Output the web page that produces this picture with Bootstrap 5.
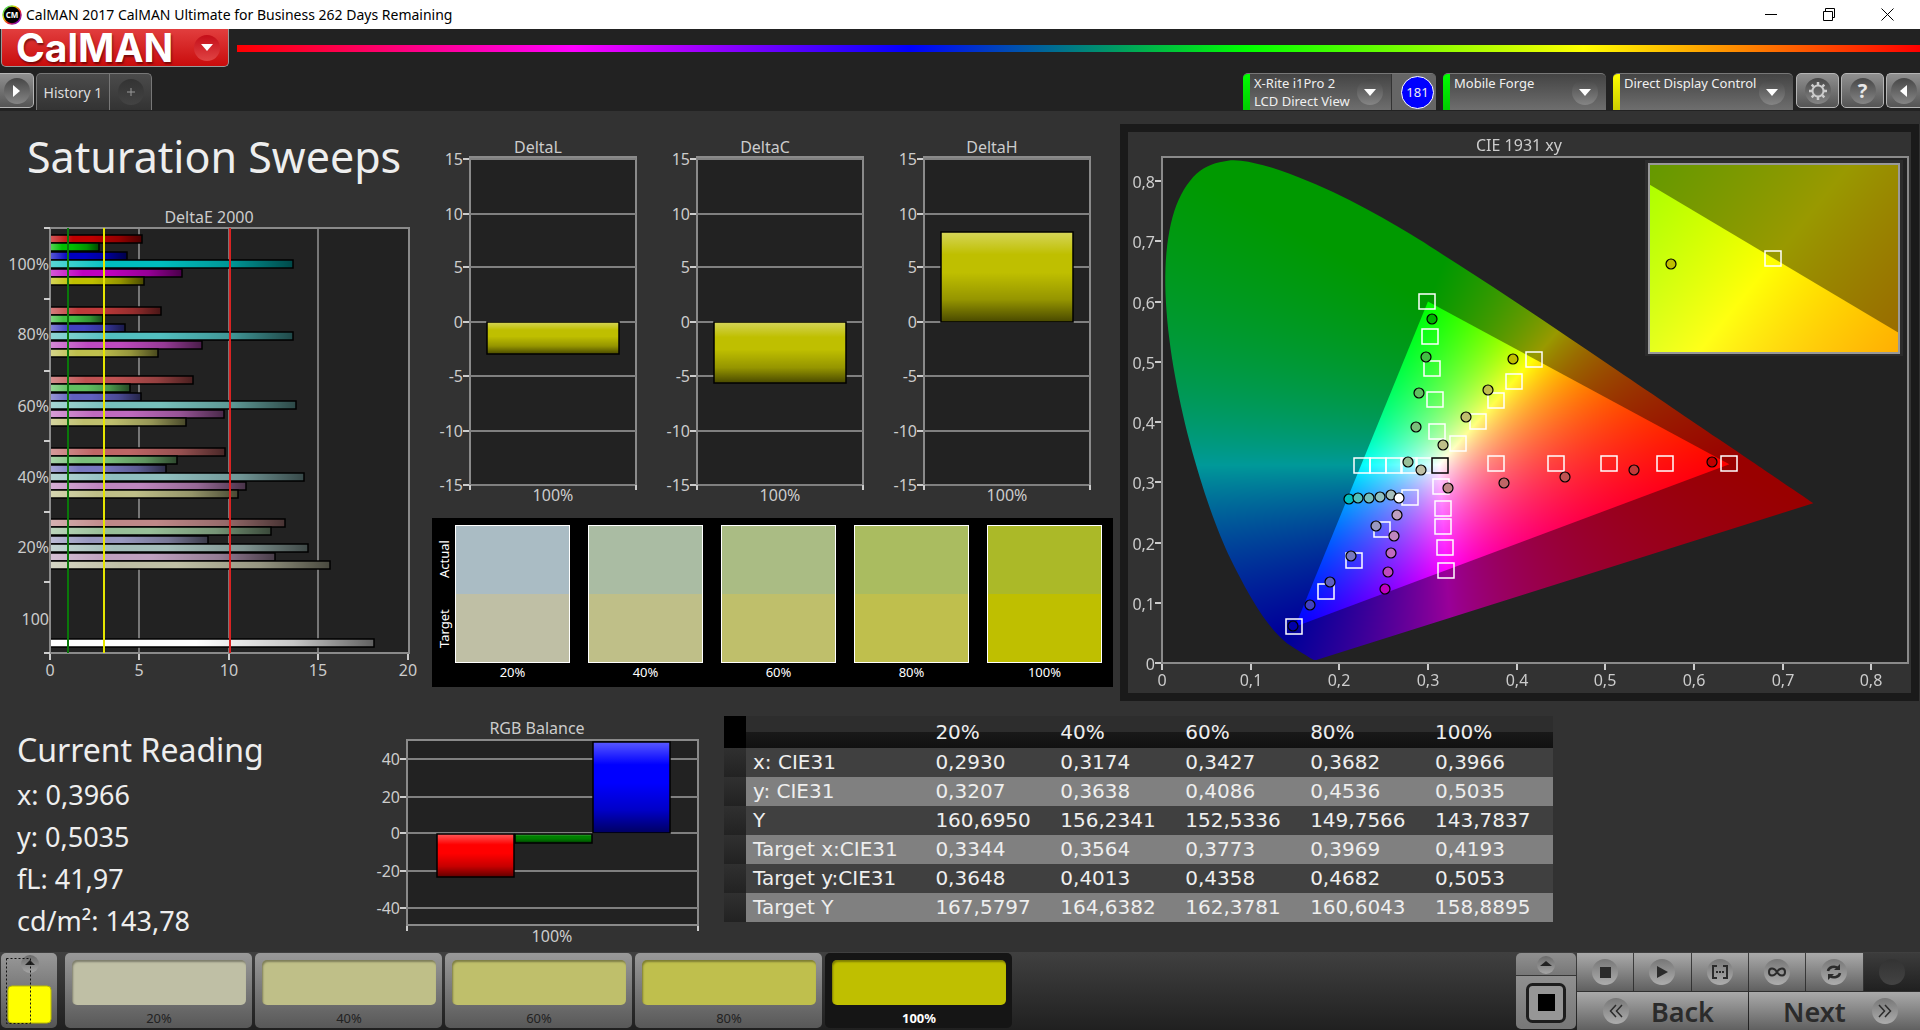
<!DOCTYPE html>
<html lang="en">
<head>
<meta charset="utf-8">
<meta name="viewport" content="width=device-width, initial-scale=1">
<title>CalMAN 2017 CalMAN Ultimate for Business</title>
<link href="https://cdn.jsdelivr.net/npm/bootstrap@5.3.0/dist/css/bootstrap.min.css" rel="stylesheet">
<style>
body{background:#323232;color:#e8e8e8;font-family:"Noto Sans","Open Sans",sans-serif;font-size:13px;line-height:19px}
button{font:inherit;color:inherit;border:0;padding:0}
svg{display:block}
.titlebar{height:29px;background:#fff;color:#000;font-size:14px;padding:0 4px 0 2px}
.titlebar button{width:58px;height:29px;background:none;display:grid;place-items:center}
.apphead{background:#222;padding-bottom:1px}
.brand{margin-left:1px;width:228px;height:38px;padding:0 8px 0 14px;background:linear-gradient(#e23e3e,#c90c0c);border:1px solid #999;border-top:0;border-radius:0 0 5px 5px;color:#fff;font-family:Inter,Lato,sans-serif;font-weight:700;font-size:39px;line-height:36px;text-shadow:1px 2px 2px rgba(60,0,0,.6)}
.rainbow{height:7px;background:linear-gradient(90deg,#f00,#f0f,#00f,#0f0,#ff0,#f00);margin-left:8px}
.tabsrow{padding-top:6px}
.orb{width:26px;height:26px;border-radius:50%;background:linear-gradient(#474747,#858585);display:grid;place-items:center;flex:none}
.orb-red{background:linear-gradient(#c40d18,#e04444)}
.orb-dim{background:linear-gradient(#333,#434343);color:#888}
.orb-light{background:linear-gradient(#777,#adadad);color:#2b2b2b}
.keybtn{width:43px;height:35px;margin-right:2px;border:1px solid #b5b5b5;border-radius:5px;background:linear-gradient(#909090,#555);display:grid;place-items:center}
.key-left{width:34px;border-left:0;border-radius:0 5px 5px 0}
.key-right{width:34px;margin-right:0;border-right:0;border-radius:5px 0 0 5px}
.help{font-size:20px}
.histtab{width:74px;height:37px;border:1px solid #777;border-bottom:0;border-radius:5px 0 0 0;background:linear-gradient(#4b4b4b,#333);font-size:14px;color:#ddd}
.histadd{width:42px;border-left:0;border-radius:0 5px 0 0;display:grid;place-items:center}
.device{height:37px;border-radius:5px 5px 0 0;border-top:1px solid #777;background:linear-gradient(#444,#6e6e6e);display:flex;overflow:hidden;color:#f0f0f0;margin-right:7px}
.device .pick{background:none;display:flex;flex:1;text-align:left;align-items:center;padding-right:8px;line-height:18px}
.device .pick span:first-child{flex:1;align-self:flex-start;padding-left:4px;white-space:nowrap;width:0}
.dev-meter{width:193px}
.dev-source{width:163px}
.dev-display{width:180px;margin-right:3px}
.led{width:7px;background:linear-gradient(#0f0,#0c0);flex:none}
.led-y{background:linear-gradient(#ff0,#cc0)}
.meter{width:45px;padding-right:2px;border-left:1px solid #333;background:#666;display:flex;align-items:center;justify-content:flex-end}
.meter b{width:33px;height:33px;border-radius:50%;border:1px solid #fff;background:#00f;font-weight:400;line-height:31px;text-align:center}
.toprow{display:grid;grid-template-columns:432fr 688fr 800fr}
.lowrow{display:grid;grid-template-columns:360fr 364fr 829fr 367fr;padding-top:15px}
h1{font-size:43px;line-height:48px;font-weight:400;padding:22px 0 24px 27px;margin:0;color:#eee;white-space:nowrap}
.chart{width:100%;height:auto;font-size:16px;fill:#ccc}
.midcol{padding-top:13px}
.swatches{background:#000;margin:8px 7px 0 0;padding:7px 11px 5px 3px;color:#fff;gap:18px}
.sidecap{writing-mode:vertical-rl;transform:rotate(180deg);width:18px;display:flex;margin:0 -16px 19px 0}
.sidecap span{flex:1;text-align:center}
.swatch{flex:1 1 0}
.swatch:nth-child(2){margin-left:0}
.swatch i{display:block;height:68px}
.swatch div{border:1px solid #fff}
.swatch p{margin:0;text-align:center;line-height:19px}
.ciepanel{margin:13px 1px 0 0;border:8px solid #1a1a1a}
.reading{padding:12px 0 0 17px;color:#eee}
.reading h2{font-size:32px;line-height:44px;margin:0 0 2px;font-weight:400}
.reading p{font-size:27px;line-height:42px;margin:0}
.grid-data{width:100%;table-layout:fixed;font-family:"DejaVu Sans",sans-serif;font-size:20px;color:#eee}
.grid-data th,.grid-data td{padding:0 0 0 7px;font-weight:400;height:29px;line-height:29px;white-space:nowrap}
.grid-data thead th{height:32px;line-height:32px;background:linear-gradient(#2d2d2d 50%,#191919 50%,#111)}
.grid-data tbody tr{background:#404040}
.grid-data tbody tr:nth-child(even){background:#808080}
.grid-data tbody td:first-child{background:linear-gradient(#303030,#222)}
.grid-data thead th:first-child{background:#000}
.col-grip{width:22px}
.col-name{width:22%}
.bottombar{height:78px;background:linear-gradient(#404040,#202020);padding:1px 0 2px 1px}
.step{width:187px;height:75px;margin-right:3px;border-radius:5px;background:linear-gradient(#999,#585858);padding:6px 6px 0 7px;color:#222}
.step i{display:block;height:45px;border-radius:5px;box-shadow:inset 1px 2px 2px rgba(0,0,0,.35)}
.step span{display:block;padding-top:4px}
.step.active{background:#151515;color:#fff;font-weight:700}
.levelbtn{width:56px;height:75px;border-radius:5px;background:linear-gradient(#999,#555);margin-right:8px}
.stopcol{width:60px;margin-right:1px}
.stopcol button{width:100%;height:53px;border-radius:0 0 5px 5px;background:linear-gradient(#909090,#777);display:grid;place-items:center}
.stopcol button:first-child{height:22px;border-radius:5px 5px 0 0;margin-bottom:1px}
.mediagrid{display:grid;grid-template-columns:repeat(6,1fr);gap:1px;width:343px}
.mediagrid button{height:38px;background:linear-gradient(#aaa,#606060);display:grid;place-items:center}
.mediagrid .nav-wide{grid-column:span 3;display:flex;align-items:center;justify-content:space-between;font-size:27px;font-weight:600;color:#2b2b2b;padding:0 34px 0 26px}
.mediagrid .nav-next{padding:0 22px 0 34px}
.mediagrid .idle{background:linear-gradient(#3c3c3c,#202020)}
</style>
<script src="https://cdn.jsdelivr.net/npm/bootstrap@5.3.0/dist/js/bootstrap.bundle.min.js"></script>
</head>
<body class="d-flex flex-column min-vh-100">
<div class="titlebar d-flex align-items-center">
  <svg width="20" height="20" viewBox="0 0 20 20" class="me-1"><defs><linearGradient id="ring" x2="1" y2="1"><stop stop-color="#0c8"/><stop offset=".35" stop-color="#dd0"/><stop offset=".6" stop-color="#e22"/><stop offset="1" stop-color="#40f"/></linearGradient></defs><circle cx="10" cy="10" r="9" fill="#000" stroke="url(#ring)" stroke-width="1.5"/><text x="10" y="13" font-size="8" font-weight="700" text-anchor="middle" fill="#fff">CM</text></svg>
  <span class="me-auto">CalMAN 2017 CalMAN Ultimate for Business 262 Days Remaining</span>
  <button aria-label="Minimize"><svg width="12" height="12"><path d="M0 5.500h12" stroke="#000"/></svg></button>
  <button aria-label="Restore"><svg width="13" height="13" fill="none" stroke="#000"><path d="M.5 3.500h9v9h-9zM2.500 3.500v-3h9v9h-2"/></svg></button>
  <button aria-label="Close"><svg width="13" height="13" stroke="#000"><path d="M.5.5l12 12M12.500.5l-12 12"/></svg></button>
</div>
<header class="apphead">
  <div class="d-flex align-items-center">
    <button class="brand d-flex align-items-center justify-content-between">CalMAN <span class="orb orb-red"><svg width="12" height="7"><path d="M0 0h12l-6 7z" fill="#fff"/></svg></span></button>
    <div class="rainbow flex-grow-1"></div>
  </div>
  <div class="tabsrow d-flex align-items-start">
    <button class="keybtn key-left" aria-label="Expand"><span class="orb"><svg width="7" height="12"><path d="M0 0l7 6-7 6z" fill="#fff"/></svg></span></button>
    <button class="histtab">History 1</button>
    <button class="histtab histadd me-auto" aria-label="Add history"><span class="orb orb-dim"><svg width="10" height="10"><path d="M5 1v8M1 5h8" stroke="#999"/></svg></span></button>
    <div class="device dev-meter"><span class="led"></span><button class="pick"><span>X-Rite i1Pro 2<br>LCD Direct View</span><span class="orb"><svg width="12" height="7"><path d="M0 0h12l-6 7z" fill="#fff"/></svg></span></button><div class="meter"><b>181</b></div></div>
    <div class="device dev-source"><span class="led"></span><button class="pick"><span>Mobile Forge</span><span class="orb"><svg width="12" height="7"><path d="M0 0h12l-6 7z" fill="#fff"/></svg></span></button></div>
    <div class="device dev-display"><span class="led led-y"></span><button class="pick"><span>Direct Display Control</span><span class="orb"><svg width="12" height="7"><path d="M0 0h12l-6 7z" fill="#fff"/></svg></span></button></div>
    <button class="keybtn" aria-label="Settings"><span class="orb"><svg width="18" height="18" viewBox="-9 -9 18 18" fill="none" stroke="#ccc"><circle r="5.500" stroke-width="2"/><g stroke-width="2.500"><path d="M0-6v-3M0 6v3M-6 0h-3M6 0h3M-4.200-4.200l-2.100-2.100M4.200-4.200l2.100-2.100M-4.200 4.200l-2.100 2.100M4.200 4.200l2.100 2.100"/></g></svg></span></button>
    <button class="keybtn" aria-label="Help"><span class="orb help fw-bold">?</span></button>
    <button class="keybtn key-right" aria-label="Collapse"><span class="orb"><svg width="7" height="12"><path d="M7 0l-7 6 7 6z" fill="#fff"/></svg></span></button>
  </div>
</header>
<main class="flex-grow-1">
  <section class="toprow">
    <div>
      <h1>Saturation Sweeps</h1>
      <svg class="chart" id="deltae" viewBox="0 205 432 475" role="img" aria-label="DeltaE 2000"></svg>
    </div>
    <div class="midcol">
      <svg class="chart" id="deltas" viewBox="432 124 688 386" role="img" aria-label="DeltaL, DeltaC and DeltaH"></svg>
      <div class="swatches d-flex" id="swatches"><div class="sidecap"><span>Target</span><span>Actual</span></div></div>
    </div>
    <div>
      <div class="ciepanel position-relative">
        <canvas id="cie" width="783" height="561" class="d-block w-100"></canvas>
        <svg class="chart position-absolute top-0 start-0" id="ciemarks" viewBox="1128 132 783 561" role="img" aria-label="CIE 1931 xy"></svg>
      </div>
    </div>
  </section>
  <section class="lowrow">
    <div class="reading">
      <h2>Current Reading</h2>
      <p>x: 0,3966</p><p>y: 0,5035</p><p>fL: 41,97</p><p>cd/m²: 143,78</p>
    </div>
    <svg class="chart" id="rgbbal" viewBox="360 716 364 232" role="img" aria-label="RGB Balance"></svg>
    <div>
      <table class="grid-data">
        <colgroup><col class="col-grip"><col class="col-name"><col><col><col><col><col></colgroup>
        <thead><tr><th></th><th></th><th>20%</th><th>40%</th><th>60%</th><th>80%</th><th>100%</th></tr></thead>
        <tbody>
          <tr><td></td><th>x: CIE31</th><td>0,2930</td><td>0,3174</td><td>0,3427</td><td>0,3682</td><td>0,3966</td></tr>
          <tr><td></td><th>y: CIE31</th><td>0,3207</td><td>0,3638</td><td>0,4086</td><td>0,4536</td><td>0,5035</td></tr>
          <tr><td></td><th>Y</th><td>160,6950</td><td>156,2341</td><td>152,5336</td><td>149,7566</td><td>143,7837</td></tr>
          <tr><td></td><th>Target x:CIE31</th><td>0,3344</td><td>0,3564</td><td>0,3773</td><td>0,3969</td><td>0,4193</td></tr>
          <tr><td></td><th>Target y:CIE31</th><td>0,3648</td><td>0,4013</td><td>0,4358</td><td>0,4682</td><td>0,5053</td></tr>
          <tr><td></td><th>Target Y</th><td>167,5797</td><td>164,6382</td><td>162,3781</td><td>160,6043</td><td>158,8895</td></tr>
        </tbody>
      </table>
    </div>
  </section>
</main>
<footer class="bottombar d-flex">
  <button class="levelbtn" aria-label="Pattern level"><svg width="56" height="75"><defs><linearGradient id="orbg" x2="0" y2="1"><stop stop-color="#6a6a6a"/><stop offset="1" stop-color="#a5a5a5"/></linearGradient></defs><circle cx="29" cy="11" r="9" fill="url(#orbg)"/><path d="M24 12l5-5 5 5z" fill="#222"/><rect x="7" y="33" width="43" height="37" rx="4" fill="#ff0" stroke="#bb0"/><path d="M5.500 5.500h24v65h-24z" fill="none" stroke="#111" stroke-dasharray="2 2"/></svg></button>
  <button class="step"><i style="background:#bfbfa5"></i><span>20%</span></button>
  <button class="step"><i style="background:#bfbf88"></i><span>40%</span></button>
  <button class="step"><i style="background:#bfbf6b"></i><span>60%</span></button>
  <button class="step"><i style="background:#bfbf4d"></i><span>80%</span></button>
  <button class="step active"><i style="background:#bfbf00"></i><span>100%</span></button>
  <div class="stopcol ms-auto">
    <button aria-label="Up"><svg width="20" height="20"><circle cx="10" cy="11" r="9" fill="url(#orbg)"/><path d="M4 12l6-5 6 5z" fill="#222"/></svg></button>
    <button aria-label="Stop pattern"><svg width="40" height="40"><rect x="1.500" y="1.500" width="37" height="37" rx="5" fill="#969696" stroke="#1d1d1d" stroke-width="3"/><path d="M12 11h17v17h-17z"/></svg></button>
  </div>
  <div class="mediagrid">
    <button aria-label="Stop"><span class="orb orb-light"><svg width="11" height="11"><path d="M0 0h11v11H0z" fill="#2b2b2b"/></svg></span></button>
    <button aria-label="Play"><span class="orb orb-light"><svg width="12" height="12"><path d="M1 0l11 6-11 6z" fill="#2b2b2b"/></svg></span></button>
    <button aria-label="Read series"><span class="orb orb-light"><svg width="16" height="14" fill="none" stroke="#2b2b2b" stroke-width="2"><path d="M5 1H1v12h4M11 1h4v12h-4M4 7h2M7 7h2M10 7h2"/></svg></span></button>
    <button aria-label="Continuous"><span class="orb orb-light"><svg width="18" height="10" fill="none" stroke="#2b2b2b" stroke-width="2"><path d="M9 5C6 0 1 .5 1 5s5 5 8 0 8-4.500 8 0-5 5-8 0z"/></svg></span></button>
    <button aria-label="Refresh"><span class="orb orb-light"><svg width="16" height="16" viewBox="0 0 16 16" fill="none" stroke="#2b2b2b" stroke-width="2.500"><path d="M2 7a6 5 0 0 1 10-3M14 9a6 5 0 0 1-10 3"/><path d="M14 0v6H8zM2 16v-6h6z" fill="#2b2b2b" stroke="none"/></svg></span></button>
    <button class="idle" aria-label="Record"><span class="orb orb-dim"></span></button>
    <button class="nav-wide"><span class="orb orb-light"><svg width="14" height="14" fill="none" stroke="#2b2b2b" stroke-width="1.500"><path d="M7 1L1.500 7 7 13M13 1L7.500 7 13 13"/></svg></span>Back</button>
    <button class="nav-wide nav-next">Next<span class="orb orb-light"><svg width="14" height="14" fill="none" stroke="#2b2b2b" stroke-width="1.500"><path d="M1 1l5.500 6L1 13M7 1l5.500 6L7 13"/></svg></span></button>
  </div>
</footer>
<script>
const rect=(x1,y1,x2,y2,a)=>`<rect x="${x1}" y="${y1}" width="${x2-x1}" height="${y2-y1}" ${a}/>`;
const line=(x1,y1,x2,y2,c,w=2)=>`<line x1="${x1}" y1="${y1}" x2="${x2}" y2="${y2}" stroke="${c}" stroke-width="${w}"/>`;
const text=(x,y,s,a='middle')=>`<text x="${x}" y="${y}" text-anchor="${a}">${s}</text>`;
const shade=(id,dir)=>`<defs><linearGradient id="${id}" ${dir}><stop stop-color="#fff" stop-opacity=".35"/><stop offset=".25" stop-color="#fff" stop-opacity="0"/><stop offset=".45" stop-color="#000" stop-opacity="0"/><stop offset=".75" stop-color="#000" stop-opacity=".22"/><stop offset="1" stop-color="#000" stop-opacity=".62"/></linearGradient></defs>`;
const bar=(x1,y1,x2,y2,c,g)=>rect(x1,y1,x2,y2,`fill="${c}"`)+rect(x1,y1,x2,y2,`fill="url(#${g})" stroke="#000" stroke-width="1.500"`);

/* DeltaE 2000 */
{
  const ends=[[142,99,127,293,182,144],[161,103,125,293,202,158],[193,130,141,296,224,186],[225,177,166,304,246,238],[285,271,208,308,275,330]];
  const cols=[['#bf0000','#00bf00','#0000bf','#00bfbf','#bf00bf','#bfbf00'],['#bf3a3a','#42bf42','#4242bf','#52bfbf','#bf4abf','#bfbf4d'],['#bf5252','#60bf60','#6060bf','#76bfbb','#bf6abf','#bfbf6e'],['#bf6666','#7abf7a','#7878bf','#90bfbf','#bf86bf','#bfbf88'],['#bf8888','#98bf98','#9898bf','#a5bfbb','#bfa0bf','#bfbfa5']];
  const tops=[235,307,376,448,519];
  let s=shade('gh','x2="1" y2="0"')+rect(51,228,409,653,'fill="#222"');
  s+=text(209,223,'DeltaE 2000');
  [139,229,318].forEach(x=>s+=line(x,228,x,653,'#777',2));
  ends.forEach((g,i)=>g.forEach((e,j)=>{const y=tops[i]+Math.round(j*8.4);s+=bar(50,y,e,y+8,cols[i][j],'gh')}));
  s+=bar(50,639,374,647,'#fff','gh');
  s+=rect(50,228,409,653,'fill="none" stroke="#8a8a8a" stroke-width="2"');
  s+=line(68,228,68,653,'#0a780a')+line(104,228,104,653,'#e6e600')+line(230,228,230,653,'#d92222');
  [228,299,371,441,512,582,653].forEach(y=>s+=line(44,y,50,y,'#ccc'));
  [['100%',270],['80%',340],['60%',412],['40%',483],['20%',553],['100',625]].forEach(v=>s+=text(49,v[1],v[0],'end'));
  [[50,0],[139,5],[229,10],[318,15],[408,20]].forEach(v=>s+=line(v[0],654,v[0],660,'#ccc')+text(v[0],676,v[1]));
  deltae.innerHTML=s;
}
/* DeltaL, DeltaC, DeltaH */
{
  let s=shade('gv','x2="0" y2="1"');
  [['DeltaL',470,322,354],['DeltaC',697,322,383],['DeltaH',924,232,322]].forEach(([n,x,a,b])=>{
    s+=rect(x,157,x+166,485,'fill="#222" stroke="#8a8a8a" stroke-width="2"')+text(x+68,153,n)+text(x+83,501,'100%');
    [[15,159],[10,214],[5,267],[0,322],[-5,376],[-10,431],[-15,485]].forEach(v=>s+=line(x,v[1],x+166,v[1],'#808080')+line(x-7,v[1],x-1,v[1],'#ccc')+text(x-7,v[1]+6,v[0],'end'));
    s+=line(x,485,x,490,'#ccc')+line(x+166,485,x+166,490,'#ccc')+bar(x+17,a,x+149,b,'#bfbf00','gv');
  });
  deltas.innerHTML=s;
}
/* RGB balance */
{
  let s=rect(407,740,698,925,'fill="#222" stroke="#8a8a8a" stroke-width="2"')+text(537,734,'RGB Balance')+text(552,942,'100%');
  [[40,759],[20,797],[0,833],[-20,871],[-40,908]].forEach(v=>s+=line(407,v[1],698,v[1],'#808080')+line(400,v[1],406,v[1],'#ccc')+text(400,v[1]+6,v[0],'end'));
  s+=line(407,926,407,931,'#ccc')+line(698,926,698,931,'#ccc');
  s+=bar(437,834,514,877,'#f00','gv')+bar(515,834,592,843,'#008000','gv')+bar(593,742,670,833,'#00f','gv');
  rgbbal.innerHTML=s;
}
/* Actual and target swatches */
[['20%','#aabcc4','#bfbfa5'],['40%','#aabca3','#bfbf88'],['60%','#aabc84','#bfbf6b'],['80%','#aabc60','#bfbf4d'],['100%','#abb928','#bfbf00']].forEach(v=>
  swatches.insertAdjacentHTML('beforeend',`<div class="swatch"><div><i style="background:${v[1]}"></i><i style="background:${v[2]}"></i></div><p>${v[0]}</p></div>`));

/* CIE 1931 chromaticity diagram */
const locus=[.1741,.005,.1714,.0051,.1689,.0069,.1644,.0109,.1566,.0177,.144,.0297,.1355,.0399,.1241,.0578,.1096,.0868,.0913,.1327,.0687,.2007,.0454,.295,.0235,.4127,.0082,.5384,.0039,.6548,.0139,.7502,.0389,.812,.0743,.8338,.1142,.8262,.1547,.8059,.1929,.7816,.2296,.7543,.2658,.7243,.3016,.6923,.3731,.6245,.4441,.5547,.5125,.4866,.5752,.4242,.627,.3725,.6658,.334,.6915,.3083,.719,.2809,.7347,.2653];
const P=[];for(let i=0;i<locus.length;i+=2)P.push([locus[i],locus[i+1]]);
const tri=[[.64,.33],[.3,.6],[.15,.06]];
const main={X:x=>34+886.5*x,Y:y=>531-602.5*y,ix:px=>(px-34)/886.5,iy:py=>(531-py)/602.5};
const zoomed={X:x=>646+(x-.4193)*4432,Y:y=>126.5-(y-.5053)*3320,ix:px=>.4193+(px-646)/4432,iy:py=>.5053-(py-126.5)/3320};
function field(m,k){
  const c=document.createElement('canvas');c.width=783;c.height=561;const g=c.getContext('2d'),d=g.createImageData(783,561);
  for(let j=0,o=0;j<561;j++)for(let i=0;i<783;i++,o+=4){
    const x=m.ix(i+.5),y=Math.max(m.iy(j+.5),.0005),X=x/y,Z=(1-x-y)/y;
    const r=Math.max(0,3.2406*X-1.5372-.4986*Z),gr=Math.max(0,-.9689*X+1.8758+.0415*Z),b=Math.max(0,.0557*X-.204+1.057*Z),q=255*k/Math.max(r,gr,b);
    d.data[o]=r*q;d.data[o+1]=gr*q;d.data[o+2]=b*q;d.data[o+3]=255;
  }
  g.putImageData(d,0,0);return c;
}
const g=cie.getContext('2d');
g.fillStyle='#323232';g.fillRect(0,0,783,561);
g.fillStyle='#222';g.fillRect(34,25,746,506);
g.save();g.beginPath();g.moveTo(main.X(P[0][0]),main.Y(P[0][1]));
for(let i=0;i<P.length-1;i++){
  const a=P[Math.max(i-1,0)],b=P[i],c=P[i+1],d=P[Math.min(i+2,P.length-1)];
  g.bezierCurveTo(main.X(b[0]+(c[0]-a[0])/6),main.Y(b[1]+(c[1]-a[1])/6),main.X(c[0]-(d[0]-b[0])/6),main.Y(c[1]-(d[1]-b[1])/6),main.X(c[0]),main.Y(c[1]));
}
g.closePath();g.clip();g.drawImage(field(main,.6),0,0);g.restore();
const triClip=m=>{g.beginPath();tri.forEach(p=>g.lineTo(m.X(p[0]),m.Y(p[1])));g.closePath();g.clip()};
g.save();triClip(main);g.drawImage(field(main,1),0,0);g.restore();
g.fillStyle='#2c2c2c';g.fillRect(517,28,258,196);
g.save();g.beginPath();g.rect(521,32,250,189);g.clip();g.drawImage(field(zoomed,.6),0,0);triClip(zoomed);g.drawImage(field(zoomed,1),0,0);g.restore();
{
  const sq=(x,y,c='#fff')=>rect(x-7,y-7,x+9,y+8,`fill="none" stroke="${c}" stroke-width="1.500"`);
  const dot=(x,y,c)=>`<circle cx="${x+1}" cy="${y+1}" r="5" fill="${c}" stroke="#000" stroke-width="1.200"/>`;
  const px=x=>1162+886.5*x,py=y=>663-602.5*y;
  let s=rect(1162,157,1908,663,'fill="none" stroke="#8a8a8a" stroke-width="2"')+rect(1649,164,1899,353,'fill="none" stroke="#999" stroke-width="2"')+text(1519,151,'CIE 1931 xy');
  for(let i=0;i<9;i++){
    const l=i?'0,'+i:'0',x=Math.round(px(i/10)),y=Math.round(py(i/10));
    s+=line(x,664,x,670,'#ccc')+text(x,686,l)+line(1155,y,1161,y,'#ccc')+text(1155,y+7,l,'end');
  }
  [[1426,301],[1429,336],[1431,368],[1434,399],[1436,431],[1361,465],[1377,465],[1393,465],[1408,465],[1423,465],[1409,497],[1381,529],[1353,560],[1325,591],[1293,626],[1440,486],[1442,508],[1442,526],[1444,547],[1445,570],[1495,463],[1555,463],[1608,463],[1664,463],[1728,463]].forEach(p=>s+=sq(p[0],p[1]));
  [[.3344,.3648],[.3564,.4013],[.3773,.4358],[.3969,.4682],[.4193,.5053]].forEach(p=>s+=sq(Math.round(px(p[0]))-1,Math.round(py(p[1]))));
  s+=sq(1439,465,'#000')+sq(1772,258);
  [[1431,318,'#00b300'],[1425,356,'#42bf42'],[1418,392,'#60bf60'],[1415,426,'#7abf7a'],[1407,461,'#98bf98'],
   [1348,498,'#00bfbf'],[1357,497,'#52bfbb'],[1368,497,'#76bfbb'],[1379,496,'#90bfbf'],[1390,494,'#a5bfbb'],[1398,497,'#fff'],
   [1396,514,'#bfa0bf'],[1393,535,'#bf86bf'],[1390,552,'#bf6abf'],[1387,571,'#bf4abf'],[1384,588,'#bf00bf'],
   [1375,525,'#9898bf'],[1350,555,'#7878bf'],[1329,581,'#6060bf'],[1309,604,'#4242bf'],[1292,625,'#0000a8'],
   [1447,487,'#bf8888'],[1503,482,'#bf6666'],[1564,476,'#bf5252'],[1633,469,'#bf3a3a'],[1711,461,'#bf0000'],
   [1670,263,'#bfbf00'],[1420,469,'#bfbfa5'],[1442,444,'#bfbf88'],[1465,416,'#bfbf6e'],[1487,389,'#bfbf4d'],[1512,358,'#bfbf00']].forEach(p=>s+=dot(...p));
  ciemarks.innerHTML=s;
}
</script>
</body>
</html>
